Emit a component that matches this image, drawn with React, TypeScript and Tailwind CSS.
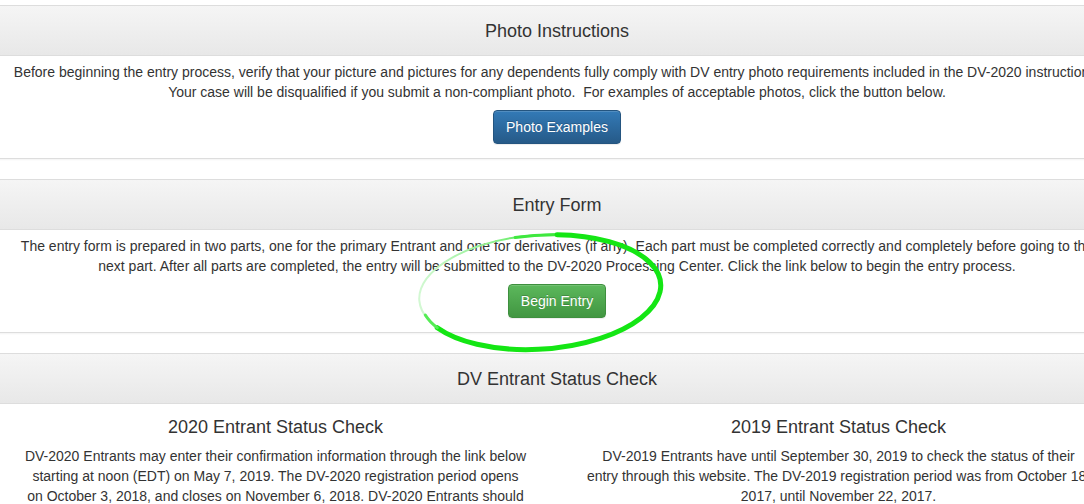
import React from "react";

const font = { fontFamily: '"Liberation Sans", Arial, Helvetica, sans-serif' };

function Panel({
  title,
  children,
}: {
  title: string;
  children: React.ReactNode;
}) {
  return (
    <div className="mb-[20px] rounded-[4px] border border-[#ddd] bg-white shadow-[0_1px_2px_rgba(0,0,0,0.05)]">
      <div className="flex h-[50px] items-center justify-center rounded-t-[3px] border-b border-[#ddd] bg-linear-to-b from-[#f5f5f5] to-[#e8e8e8] text-[18px] leading-[20px] text-[#333]">
        {title}
      </div>
      {children}
    </div>
  );
}

function Button({
  tone,
  children,
}: {
  tone: "primary" | "success";
  children: React.ReactNode;
}) {
  const cls =
    tone === "primary"
      ? "border-[#245580] bg-linear-to-b from-[#337ab7] to-[#265a88]"
      : "border-[#3e8f3e] bg-linear-to-b from-[#5cb85c] to-[#419641]";
  return (
    <button
      className={
        "inline-block h-[34px] rounded-[4px] border px-[12px] text-[14px] leading-[20px] text-white [text-shadow:0_-1px_0_rgba(0,0,0,0.2)] shadow-[inset_0_1px_0_rgba(255,255,255,0.15),0_1px_1px_rgba(0,0,0,0.075)] " +
        cls
      }
    >
      {children}
    </button>
  );
}

// hand-drawn highlight ring round the Begin Entry button
function Ellipse() {
  return (
    <svg
      className="pointer-events-none absolute left-0 top-0"
      width={1084}
      height={504}
      viewBox="0 0 1084 504"
    >
      <defs>
        <linearGradient id="ring" gradientUnits="userSpaceOnUse" x1="420" y1="0" x2="560" y2="0">
          <stop offset="0" stopColor="#d2f8d2" />
          <stop offset="0.6" stopColor="#86f086" />
          <stop offset="1" stopColor="#16e616" />
        </linearGradient>
      </defs>
      <g transform="rotate(-4 540 292)" fill="none" strokeLinecap="round">
        <ellipse cx="540" cy="292" rx="121" ry="57" stroke="url(#ring)" strokeWidth="2" />
        <path d="M 519 236 A 121 57 0 0 1 561 236" stroke="#3fe83f" strokeWidth="3" />
        <path d="M 561 236 A 121 57 0 1 1 435 320.5" stroke="#14e614" strokeWidth="5" />
        <path d="M 435 320.5 A 121 57 0 0 1 424 307" stroke="#55ec55" strokeWidth="3" />
      </g>
    </svg>
  );
}

export default function App() {
  return (
    <div className="relative h-[504px] w-[1084px] overflow-hidden bg-white text-[#333]" style={font}>
      <div className="ml-[-7px] w-[1128px] pt-[5px]">
        <Panel title="Photo Instructions">
          <div className="px-[15px] pb-[14px] pt-[6px] text-center text-[14px] leading-[20px]">
            <p>
              Before beginning the entry process, verify that your picture and pictures for any
              dependents fully comply with DV entry photo requirements included in the DV-2020
              instructions.
              <br />
              Your case will be disqualified if you submit a non-compliant photo.{"\u00a0"} For
              examples of acceptable photos, click the button below.
            </p>
            <div className="mt-[8px]">
              <Button tone="primary">Photo Examples</Button>
            </div>
          </div>
        </Panel>

        <Panel title="Entry Form">
          <div className="px-[15px] pb-[14px] pt-[6px] text-center text-[14px] leading-[20px]">
            <p>
              The entry form is prepared in two parts, one for the primary Entrant and one for
              derivatives (if any). Each part must be completed correctly and completely before
              going to the
              <br />
              next part. After all parts are completed, the entry will be submitted to the DV-2020
              Processing Center. Click the link below to begin the entry process.
            </p>
            <div className="mt-[8px]">
              <Button tone="success">Begin Entry</Button>
            </div>
          </div>
        </Panel>

        <Panel title="DV Entrant Status Check">
          <div className="px-[15px] pb-[14px] pt-[13px] text-center text-[14px] leading-[20px]">
            <div className="mx-[-15px] grid grid-cols-2">
              <div className="px-[15px]">
                <h4 className="text-[18px] leading-[20px]">2020 Entrant Status Check</h4>
                <p className="mx-[15px] mt-[9px]">
                  DV-2020 Entrants may enter their confirmation information through the link below
                  starting at noon (EDT) on May 7, 2019. The DV-2020 registration period opens on
                  October 3, 2018, and closes on November 6, 2018. DV-2020 Entrants should keep
                  their confirmation number until at least September 30, 2021.
                </p>
              </div>
              <div className="px-[15px]">
                <h4 className="text-[18px] leading-[20px]">2019 Entrant Status Check</h4>
                <p className="mt-[9px]">
                  DV-2019 Entrants have until September 30, 2019 to check the status of their
                  <br />
                  entry through this website. The DV-2019 registration period was from October 18,
                  <br />
                  2017, until November 22, 2017.
                </p>
              </div>
            </div>
          </div>
        </Panel>
      </div>
      <Ellipse />
    </div>
  );
}
